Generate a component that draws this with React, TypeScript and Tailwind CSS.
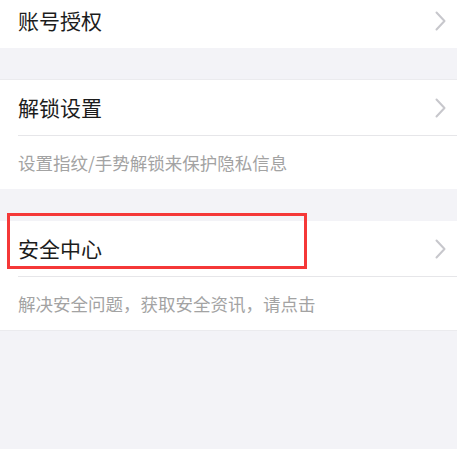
const font = { fontFamily: '"Noto Sans CJK SC", "Noto Sans", sans-serif' };

const Chevron = () => (
  <svg width="11" height="20" viewBox="0 0 11 20" fill="none" className="shrink-0">
    <path d="M1.5 1.5 L9.5 10 L1.5 18.5" stroke="#c7c7cc" strokeWidth="2" strokeLinecap="round" strokeLinejoin="round" />
  </svg>
);

const Row = ({ title, highlight }: { title: string; highlight?: boolean }) => (
  <div className="relative flex h-[55px] items-center justify-between pl-[18px] pr-[11px]">
    <span className="text-[21px] leading-none text-[#1c1c1c]">{title}</span>
    <Chevron />
    {highlight && (
      <div className="pointer-events-none absolute left-[7px] top-[-8px] h-[56px] w-[300px] border-[3px] border-[#f53838]" />
    )}
  </div>
);

const Sub = ({ text }: { text: string }) => (
  <div className="ml-[18px] flex h-[54px] items-center border-t border-[#e6e6e9]">
    <span className="text-[17.5px] leading-none text-[#a3a3a3]">{text}</span>
  </div>
);

export default function App() {
  return (
    <div className="h-[449px] w-[457px] overflow-hidden bg-[#f3f3f7]" style={font}>
      <div className="-mt-[7px] bg-white">
        <Row title="账号授权" />
      </div>
      <div className="h-[31px]" />
      <div className="border-t border-[#ebebee] bg-white">
        <Row title="解锁设置" />
        <Sub text="设置指纹/手势解锁来保护隐私信息" />
      </div>
      <div className="h-[32px]" />
      <div className="border-b border-[#ebebee] bg-white">
        <Row title="安全中心" highlight />
        <Sub text="解决安全问题，获取安全资讯，请点击" />
      </div>
    </div>
  );
}
